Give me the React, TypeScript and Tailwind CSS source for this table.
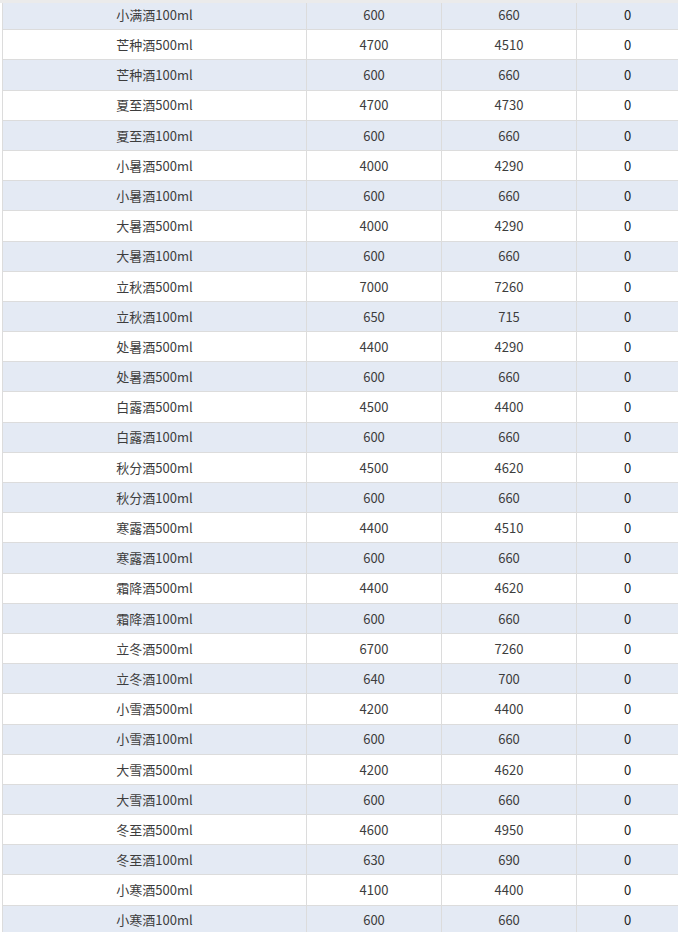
import React from 'react';

type Row = [string, number, number, number];

const rows: Row[] = [
  ['小满酒100ml', 600, 660, 0],
  ['芒种酒500ml', 4700, 4510, 0],
  ['芒种酒100ml', 600, 660, 0],
  ['夏至酒500ml', 4700, 4730, 0],
  ['夏至酒100ml', 600, 660, 0],
  ['小暑酒500ml', 4000, 4290, 0],
  ['小暑酒100ml', 600, 660, 0],
  ['大暑酒500ml', 4000, 4290, 0],
  ['大暑酒100ml', 600, 660, 0],
  ['立秋酒500ml', 7000, 7260, 0],
  ['立秋酒100ml', 650, 715, 0],
  ['处暑酒500ml', 4400, 4290, 0],
  ['处暑酒500ml', 600, 660, 0],
  ['白露酒500ml', 4500, 4400, 0],
  ['白露酒100ml', 600, 660, 0],
  ['秋分酒500ml', 4500, 4620, 0],
  ['秋分酒100ml', 600, 660, 0],
  ['寒露酒500ml', 4400, 4510, 0],
  ['寒露酒100ml', 600, 660, 0],
  ['霜降酒500ml', 4400, 4620, 0],
  ['霜降酒100ml', 600, 660, 0],
  ['立冬酒500ml', 6700, 7260, 0],
  ['立冬酒100ml', 640, 700, 0],
  ['小雪酒500ml', 4200, 4400, 0],
  ['小雪酒100ml', 600, 660, 0],
  ['大雪酒500ml', 4200, 4620, 0],
  ['大雪酒100ml', 600, 660, 0],
  ['冬至酒500ml', 4600, 4950, 0],
  ['冬至酒100ml', 630, 690, 0],
  ['小寒酒500ml', 4100, 4400, 0],
  ['小寒酒100ml', 600, 660, 0],
];

export default function App() {
  return (
    <div
      className="h-[932px] w-[678px] overflow-hidden bg-white text-[13px] text-[#3d3d3d]"
      style={{ fontFamily: '"Noto Sans CJK SC", "Microsoft YaHei", sans-serif' }}
    >
      {/* header edge of the scrolled table */}
      <div className="relative z-10 h-[3px] bg-[#ebebeb]" />
      <div className="-mt-[3px] ml-[2px] border-l border-[#dcdcdc]">
        {rows.map((row, i) => (
          <div
            key={i}
            className={`grid h-[30.2px] grid-cols-[304px_135px_135px_1fr] items-stretch border-b border-[#dcdcdc] ${
              i % 2 === 0 ? 'bg-[#e4eaf4]' : 'bg-white'
            }`}
          >
            <div className="flex items-center justify-center border-r border-[#dcdcdc]">{row[0]}</div>
            <div className="flex items-center justify-center border-r border-[#dcdcdc]">{row[1]}</div>
            <div className="flex items-center justify-center border-r border-[#dcdcdc]">{row[2]}</div>
            <div className="flex items-center justify-center text-[#222]">{row[3]}</div>
          </div>
        ))}
      </div>
    </div>
  );
}
